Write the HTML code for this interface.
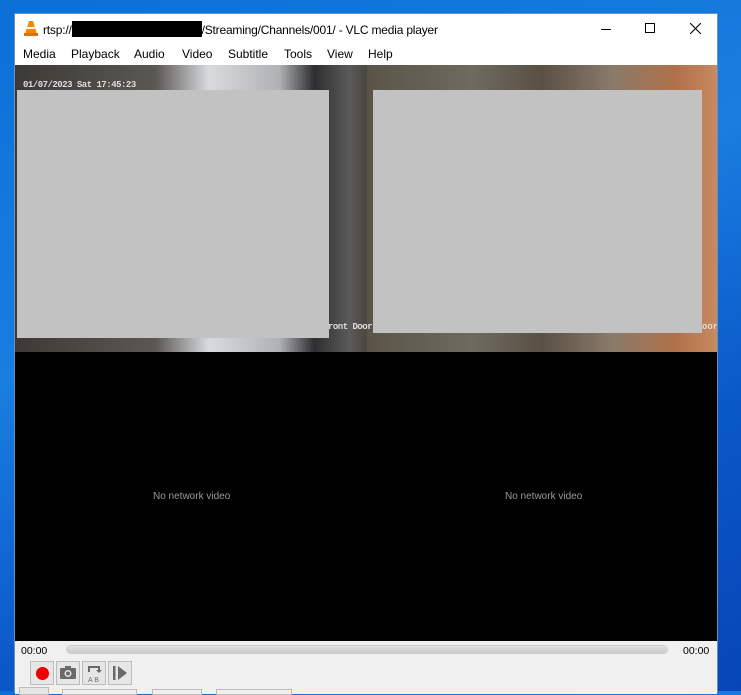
<!DOCTYPE html>
<html><head><meta charset="utf-8"><style>
*{margin:0;padding:0;box-sizing:border-box}
body{width:741px;height:691px;overflow:hidden;position:relative;font-family:"Liberation Sans",sans-serif;
background:linear-gradient(160deg,#0b6fd6 0%,#1a7ee0 40%,#0a58c8 70%,#0646b8 100%)}
.win{position:absolute;left:14px;top:13px;width:704px;height:680px;background:#f0f0f0;border:1px solid #6a8fbf;border-bottom:none}
.title{position:absolute;left:0;top:0;width:100%;height:29px;background:#fff;font-size:12px;color:#000}
.title .t{position:absolute;left:28px;top:7px;white-space:nowrap;letter-spacing:-0.2px}
.menu{position:absolute;left:0;top:29px;width:100%;height:22px;background:#fff;font-size:12px}
.menu span{position:absolute;top:4px}
.vid{position:absolute;left:0;top:51px;width:702px;height:576px;background:#000;overflow:hidden}
.cam{position:absolute;top:0;height:287px}
.gray{position:absolute;background:#c2c2c2}
.nv{position:absolute;color:#9a9a9a;font-size:10px;top:426px}
.ctl{position:absolute;left:0;top:627px;width:702px;height:53px;background:#f0f0f0;font-size:10.5px}
.btn{position:absolute;top:20px;width:24px;height:24px;border:1px solid #bcbcbc;background:#e6e6e6}
</style></head><body>
<div class="win">
 <div class="title">
  <svg style="position:absolute;left:9px;top:6px" width="14" height="16" viewBox="0 0 14 16"><path d="M5 1h4l4 13H1z" fill="#f28a00"/><path d="M3.5 7h7l.6 2H2.9z" fill="#fff"/><rect x="0" y="13" width="14" height="3" fill="#e07000"/></svg>
  <div class="t">rtsp://<span style="display:inline-block;width:130px;height:16px;background:#000;vertical-align:-3px"></span>/Streaming/Channels/001/ - VLC media player</div>
  <div style="position:absolute;left:586px;top:15px;width:10px;height:1px;background:#000"></div>
  <div style="position:absolute;left:630px;top:9px;width:10px;height:10px;border:1px solid #000"></div>
  <svg style="position:absolute;left:675px;top:9px" width="11" height="11"><path d="M0 0L11 11M11 0L0 11" stroke="#000" stroke-width="1.1"/></svg>
 </div>
 <div class="menu">
  <span style="left:8px">Media</span><span style="left:56px">Playback</span><span style="left:119px">Audio</span><span style="left:167px">Video</span><span style="left:213px">Subtitle</span><span style="left:269px">Tools</span><span style="left:312px">View</span><span style="left:353px">Help</span>
 </div>
 <div class="vid">
  <div class="cam" style="left:0;width:352px;background:linear-gradient(90deg,#3c3a36 0%,#5a5852 40%,#d8dade 55%,#b0b2b6 75%,#2e2e30 85%,#5a5a5a 95%,#4a4640 100%)"></div>
  <div class="cam" style="left:352px;width:350px;background:linear-gradient(90deg,#5a5448 0%,#6e6a60 30%,#5a5044 50%,#8a7a6a 70%,#b0704a 88%,#c88a60 100%)"></div>
  <div style="position:absolute;left:8px;top:15px;color:#ddd;font-family:'Liberation Mono',monospace;font-size:9px;font-weight:bold;letter-spacing:-0.5px">01/07/2023 Sat 17:45:23</div>
  <div style="position:absolute;left:313px;top:257px;color:#ddd;font-family:'Liberation Mono',monospace;font-size:9px;font-weight:bold;letter-spacing:-0.5px">ront Door</div>
  <div style="position:absolute;left:687px;top:257px;color:#ddd;font-family:'Liberation Mono',monospace;font-size:9px;font-weight:bold">oor</div>
  <div class="gray" style="left:2px;top:25px;width:312px;height:248px"></div>
  <div class="gray" style="left:358px;top:25px;width:329px;height:243px"></div>
  <div style="position:absolute;left:0;top:287px;width:702px;height:289px;background:#000"></div>
  <div class="nv" style="left:138px">No network video</div>
  <div class="nv" style="left:490px">No network video</div>
 </div>
 <div class="ctl">
  <div style="position:absolute;left:6px;top:4px">00:00</div>
  <div style="position:absolute;left:51px;top:4px;width:602px;height:9px;border-radius:5px;background:linear-gradient(#e0e0e0,#cacaca);border:1px solid #d0d0d0"></div>
  <div style="position:absolute;left:668px;top:4px">00:00</div>
  <div class="btn" style="left:15px"><div style="position:absolute;left:5px;top:5px;width:13px;height:13px;border-radius:50%;background:#e00"></div></div>
  <div class="btn" style="left:41px"><svg width="22" height="22"><rect x="3" y="6" width="16" height="11" rx="1" fill="#6a6a6a"/><rect x="8" y="4" width="6" height="3" fill="#6a6a6a"/><circle cx="11" cy="11.5" r="3.5" fill="#e6e6e6"/><circle cx="11" cy="11.5" r="2" fill="#6a6a6a"/></svg></div>
  <div class="btn" style="left:67px"><svg width="22" height="22"><path d="M6 10V5h10v5" stroke="#6a6a6a" stroke-width="2" fill="none"/><path d="M13 8l3 3 3-3" fill="#6a6a6a"/><text x="5" y="20" font-size="7" fill="#6a6a6a" font-family="Liberation Sans">A B</text></svg></div>
  <div class="btn" style="left:93px"><svg width="22" height="22"><rect x="4" y="4" width="2.5" height="14" fill="#6a6a6a"/><path d="M9 4l9 7-9 7z" fill="#6a6a6a"/></svg></div>
  <div style="position:absolute;left:4px;top:46px;width:30px;height:8px;border:1px solid #bcbcbc;background:#e6e6e6"></div>
  <div style="position:absolute;left:47px;top:48px;width:75px;height:6px;border:1px solid #bcbcbc"></div>
  <div style="position:absolute;left:137px;top:48px;width:50px;height:6px;border:1px solid #bcbcbc"></div>
  <div style="position:absolute;left:201px;top:48px;width:76px;height:6px;border:1px solid #bcbcbc"></div>
 </div>
</div>
</body></html>
